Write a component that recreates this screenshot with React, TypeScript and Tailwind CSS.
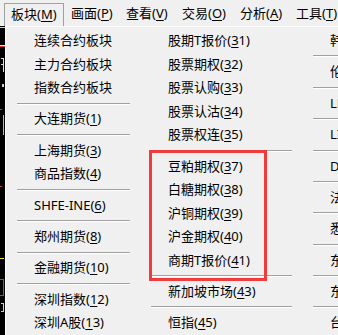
import React from "react";

const FONT = { fontFamily: '"Noto Sans", "Noto Sans CJK SC", sans-serif' };

function Label({ t }: { t: string }) {
  const i = t.indexOf("&");
  if (i < 0) return <span>{t}</span>;
  return (
    <span>
      {t.slice(0, i)}
      <span className="underline underline-offset-2 decoration-1">{t.charAt(i + 1)}</span>
      {t.slice(i + 2)}
    </span>
  );
}

type Entry = string | null;

function Column({ items, className }: { items: Entry[]; className: string }) {
  return (
    <div className={"flex flex-col " + className}>
      {items.map((it, k) =>
        it === null ? (
          <div key={k} className="h-[8px] flex items-center pl-[11px] pr-[10px]">
            <div className="w-full h-[2px] border-t border-[#a0a0a0] border-b border-b-white" />
          </div>
        ) : (
          <div key={k} className="h-[24px] flex items-center pl-[28px] whitespace-nowrap text-[13px] text-black">
            <Label t={it} />
          </div>
        )
      )}
    </div>
  );
}

const col1: Entry[] = [
  "连续合约板块",
  "主力合约板块",
  "指数合约板块",
  null,
  "大连期货(&1)",
  null,
  "上海期货(&3)",
  "商品指数(&4)",
  null,
  "SHFE-INE(&6)",
  null,
  "郑州期货(&8)",
  null,
  "金融期货(&10)",
  null,
  "深圳指数(&12)",
  "深圳A股(&13)",
];

const col2: Entry[] = [
  "股期T报价(&31)",
  "股票期权(&32)",
  "股票认购(&33)",
  "股票认沽(&34)",
  "股票权连(&35)",
  null,
  "豆粕期权(&37)",
  "白糖期权(&38)",
  "沪铜期权(&39)",
  "沪金期权(&40)",
  "商期T报价(&41)",
  null,
  "新加坡市场(&43)",
  null,
  "恒指(&45)",
];

const col3: Entry[] = [
  "韩国市场",
  null,
  "伦敦金属",
  null,
  "LME",
  null,
  "LIFFE",
  null,
  "DCE",
  null,
  "法兰克福",
  null,
  "悉尼",
  null,
  "东京",
  null,
  "东南亚",
  null,
  "台湾",
];

const menus: { t: string; w: string }[] = [
  { t: "板块(&M)", w: "w-[60px]" },
  { t: "画面(&P)", w: "w-[55px]" },
  { t: "查看(&V)", w: "w-[56px]" },
  { t: "交易(&O)", w: "w-[58px]" },
  { t: "分析(&A)", w: "w-[56px]" },
  { t: "工具(&T)", w: "w-[56px]" },
];

function LeftStrip() {
  return (
    <svg width="5" height="309" viewBox="0 0 5 309" className="block shrink-0">
      <rect x="0" y="0" width="5" height="309" fill="#000" />
      <rect x="0" y="1" width="5" height="1" fill="#d0d0d0" />
      <rect x="0" y="19" width="5" height="1" fill="#e0e0e0" />
      <rect x="0" y="20" width="5" height="1" fill="#e03030" />
      <rect x="1" y="32" width="3" height="1" fill="#ddd" />
      <rect x="3" y="32" width="1" height="14" fill="#ddd" />
      <rect x="1" y="38" width="3" height="1" fill="#ddd" />
      <rect x="2" y="58" width="2" height="3" fill="#ccc" />
      <rect x="0" y="83" width="2" height="1" fill="#e03030" />
      <rect x="3" y="89" width="1" height="20" fill="#5fd8e8" />
      <rect x="0" y="160" width="2" height="1" fill="#e03030" />
      <rect x="0" y="232" width="4" height="1" fill="#f0e030" />
      <rect x="0" y="253" width="4" height="1" fill="#e03030" />
      <rect x="3" y="253" width="1" height="17" fill="#e03030" />
      <rect x="0" y="269" width="4" height="1" fill="#e03030" />
      <rect x="1" y="277" width="2" height="1" fill="#ccc" />
      <rect x="3" y="277" width="1" height="9" fill="#ccc" />
      <rect x="1" y="285" width="2" height="1" fill="#ccc" />
    </svg>
  );
}

export default function App() {
  return (
    <div className="relative w-[338px] h-[335px] overflow-hidden bg-[#f0f0f0]" style={FONT}>
      <div className="h-[26px] flex items-stretch pl-[4px] pt-[3px] text-[13px] text-black overflow-hidden">
        {menus.map((m, i) => (
          <div
            key={i}
            className={
              "shrink-0 flex items-center pl-[6px] pb-[1px] whitespace-nowrap " +
              m.w +
              (i === 0 ? " border border-b-0 border-[#a0a0a0]" : " border border-transparent")
            }
          >
            <Label t={m.t} />
          </div>
        ))}
      </div>
      <div className="flex">
        <LeftStrip />
        <div className="flex-1 min-w-0 flex border-l border-t border-white pt-[2px] h-[309px] overflow-hidden">
          <Column items={col1} className="w-[134px] shrink-0" />
          <Column items={col2} className="w-[162px] shrink-0" />
          <Column items={col3} className="w-[140px] shrink-0" />
        </div>
      </div>
      <div className="absolute left-[149px] top-[150px] w-[118px] h-[131px] border-[3px] border-[#f03c3c]" />
    </div>
  );
}
